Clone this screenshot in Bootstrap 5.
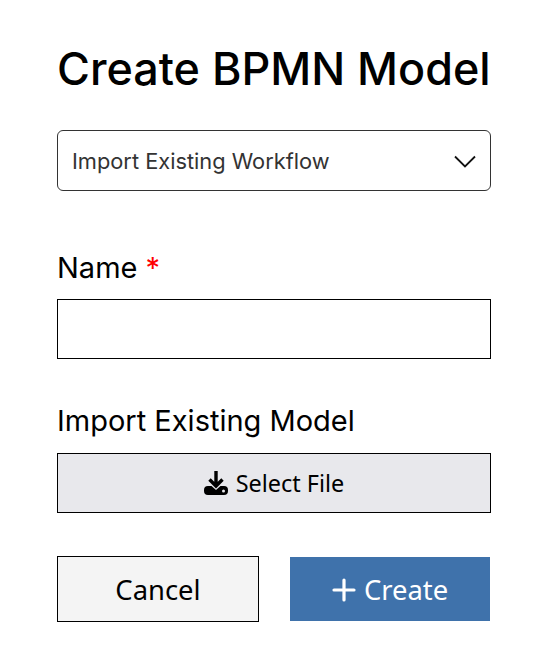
<!DOCTYPE html>
<html><head><meta charset="utf-8">
<link href="https://cdn.jsdelivr.net/npm/bootstrap@5.3.0/dist/css/bootstrap.min.css" rel="stylesheet">
<style>
body{background:#fff;color:#000;font-family:Inter,sans-serif}
.sheet{padding:41px 57px 0 57px}
.ttl{font-size:44.900px;font-weight:500;line-height:56px;margin:0 0 33px;white-space:nowrap}
.pick{height:61px;border:1px solid #333;border-radius:6px;padding:2px 15px 0 14px;font-size:21.800px;color:#333;display:flex;align-items:center;justify-content:space-between;margin-bottom:59px}
.pick svg{margin-right:-1px;margin-top:-1px}
.lbl{font-size:29px;line-height:36px;margin:0 0 13px;display:block;font-weight:400}
.lbl2{margin-bottom:14px}
.req{color:#f00}
.namebox{height:60px;border:1px solid #000;border-radius:0;margin-bottom:44px}
.filebtn{height:60px;border:1px solid #000;border-radius:0;background:#e8e8ec;color:#000;font-size:23.400px;font-family:"Noto Sans",sans-serif;display:flex;align-items:center;justify-content:center;gap:8px;width:100%;padding:2px 0 0}
.filebtn svg{margin-top:-2px}
.cancelbtn,.createbtn{font-family:"Noto Sans",sans-serif;font-size:27.400px;border-radius:0;display:flex;align-items:center;justify-content:center;padding:2px 0 0}
.cancelbtn{width:202px;height:66px;background:#f4f4f4;border:1px solid #000;color:#000}
.createbtn{width:200px;height:64px;background:#3f72ab;border:0;color:#fff;gap:8px;margin-right:1px}
.createbtn svg{margin-top:-1px}
.actions{margin-top:43px}
</style></head><body>
<div class="sheet">
<h1 class="ttl">Create BPMN Model</h1>
<div class="pick"><span>Import Existing Workflow</span><svg width="22" height="13" viewBox="0 0 22 13" fill="none" stroke="#111" stroke-width="1.800"><path d="M1 1.500l10 10 10-10"/></svg></div>
<label class="lbl">Name <span class="req">*</span></label>
<input class="form-control namebox" type="text">
<label class="lbl lbl2">Import Existing Model</label>
<button class="btn filebtn" type="button"><svg width="24" height="24" viewBox="0 0 24 24" fill="#000"><path d="M12 0v15M5.500 8.500l6.500 6.500 6.500-6.500" fill="none" stroke="#000" stroke-width="3.400"/><path fill-rule="evenodd" d="M4 15h3.500l4.500 4 4.500-4H20a4 4 0 0 1 4 4v1a4 4 0 0 1-4 4H4a4 4 0 0 1-4-4v-1a4 4 0 0 1 4-4zM19.500 18.500a1.500 1.500 0 1 0 0 3 1.500 1.500 0 0 0 0-3z"/></svg>Select File</button>
<div class="actions d-flex justify-content-between align-items-center">
<button class="btn cancelbtn" type="button">Cancel</button>
<button class="btn createbtn" type="button"><svg width="24" height="24" viewBox="0 0 24 24" stroke="#fff" stroke-width="3.200" stroke-linecap="round"><path d="M12 2v20M2 12h20"/></svg>Create</button>
</div>
</div>
</body></html>
